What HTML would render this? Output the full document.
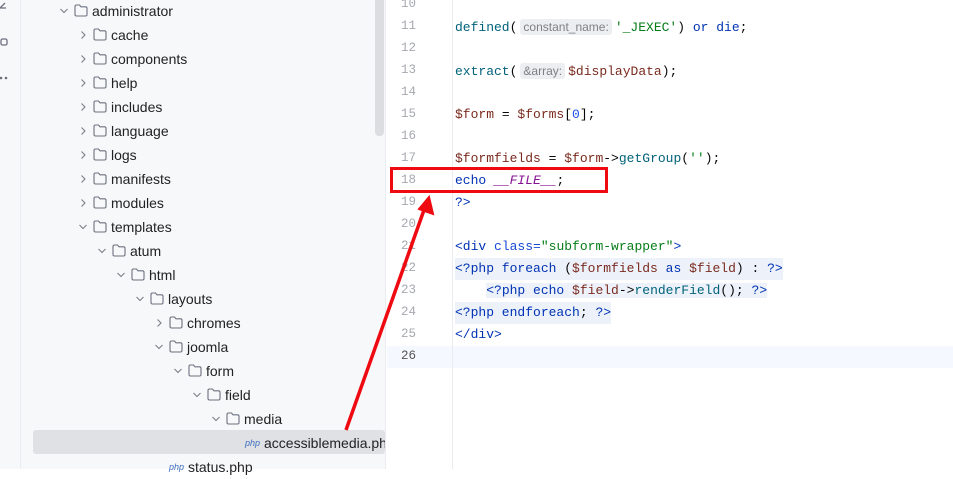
<!DOCTYPE html>
<html><head><meta charset="utf-8"><style>
*{margin:0;padding:0;box-sizing:border-box}
body{width:953px;height:469px;overflow:hidden;background:#fff;position:relative;font-family:"Liberation Sans",sans-serif}
#strip{position:absolute;left:0;top:0;width:21px;height:469px;background:#f7f8fa;border-right:1px solid #ebecf0}
#tree{position:absolute;left:21px;top:0;width:365px;height:469px;background:#f7f8fa;border-right:1px solid #ebecf0}
.row{position:absolute;height:24px;line-height:24px;font-size:14px;color:#222;white-space:nowrap;overflow:hidden}
.chev{position:absolute;top:0;width:10px;height:24px}
.fold{position:absolute;top:5px;width:14px;height:13px}
.sel{position:absolute;left:33px;top:430px;width:352px;height:24px;background:#dfe1e5;border-radius:3px}
.php{font-style:italic;font-size:9px;color:#3f6fc0;position:absolute;top:0}
#scroll{position:absolute;left:375px;top:0;width:9px;height:136px;background:#dcdde0;border-radius:0 0 4px 4px}
#gutter{position:absolute;left:386px;top:0;width:67px;height:469px;border-right:1px solid #ebecf0}
.ln{position:absolute;left:386px;width:30px;text-align:right;font-family:"Liberation Mono",monospace;font-size:12.5px;color:#a6a9b0;height:22px;line-height:22px}
.code{position:absolute;left:455px;font-family:"Liberation Mono",monospace;font-size:13px;height:22px;line-height:22px;white-space:pre;color:#080808}
.fn{color:#00627a}.kw{color:#0033b3}.v{color:#7a2a1e}.s{color:#067d17}.n{color:#1750eb}.c{color:#871094;font-style:italic}
.hint{background:#eceef2;color:#7d7f85;font-family:"Liberation Sans",sans-serif;font-size:12px;padding:1px 3px;border-radius:3px;margin:0 3px}
.phpbg{background:#edf2fa}
.cur{position:absolute;left:387px;top:346px;width:566px;height:22px;background:#f5f8fe}
</style></head><body>
<div id="strip">
<svg width="21" height="100" style="position:absolute;left:0;top:0"><path d="M0 8 L5 3 M0 8 L6 8" stroke="#6c707e" stroke-width="1.3" fill="none"/><rect x="1" y="39" width="6" height="6" rx="1.5" stroke="#6c707e" fill="none" stroke-width="1.3"/><circle cx="1" cy="78" r="1.3" fill="#6c707e"/><circle cx="6" cy="78" r="1.3" fill="#6c707e"/></svg>
</div>
<div id="tree"></div>
<div class="sel"></div>
<div id="scroll"></div>
<div id="tree-rows"></div>
<script>
var rows=[["administrator",0,"d"],["cache",1,"r"],["components",1,"r"],["help",1,"r"],["includes",1,"r"],["language",1,"r"],["logs",1,"r"],["manifests",1,"r"],["modules",1,"r"],["templates",1,"d"],["atum",2,"d"],["html",3,"d"],["layouts",4,"d"],["chromes",5,"r"],["joomla",5,"d"],["form",6,"d"],["field",7,"d"],["media",8,"d"],["accessiblemedia.php",9,"f"],["status.php",5,"f"]];
var h="";
rows.forEach(function(r,i){
 var y=i*24-1, cx=59+r[1]*19, fx=cx+15, tx=cx+33;
 h+='<div class="row" style="left:0;top:'+y+'px;width:385px">';
 if(r[2]=="d") h+='<svg class="chev" style="left:'+cx+'px" viewBox="0 0 10 24"><path d="M1.5 10 L5 13.5 L8.5 10" stroke="#7a7e85" stroke-width="1.1" fill="none"/></svg>';
 if(r[2]=="r") h+='<svg class="chev" style="left:'+cx+'px" viewBox="0 0 10 24"><path d="M3.5 8.5 L7 12 L3.5 15.5" stroke="#7a7e85" stroke-width="1.1" fill="none"/></svg>';
 if(r[2]!="f"){h+='<svg class="fold" style="left:'+fx+'px" viewBox="0 0 14 13"><path d="M1 2.5 Q1 1 2.5 1 H5.5 L7 2.8 H11.5 Q13 2.8 13 4.3 V10.5 Q13 12 11.5 12 H2.5 Q1 12 1 10.5 Z" stroke="#6c707e" stroke-width="1.1" fill="none"/></svg>';
  h+='<span style="position:absolute;left:'+tx+'px">'+r[0]+'</span>';}
 else{h+='<span class="php" style="left:'+(fx)+'px">php</span><span style="position:absolute;left:'+(tx+1)+'px">'+r[0]+'</span>';}
 h+='</div>';
});
document.getElementById("tree-rows").innerHTML=h;
</script>
<div class="cur"></div>
<div id="gutter"></div>
<div id="lns"></div>
<script>
var s="";for(var n=10;n<=26;n++){s+='<div class="ln" style="top:'+(4+(n-10)*22-11)+'px;'+(n==26?'color:#555;':'')+'">'+n+'</div>';}
document.getElementById("lns").innerHTML=s;
</script>
<div class="code" style="top:16px"><span class="fn">defined</span>(<span class="hint">constant_name:</span><span class="s">'_JEXEC'</span>) <span class="kw">or die</span>;</div>
<div class="code" style="top:60px"><span class="fn">extract</span>(<span class="hint">&amp;array:</span><span class="v">$displayData</span>);</div>
<div class="code" style="top:104px"><span class="v">$form</span> = <span class="v">$forms</span>[<span class="n">0</span>];</div>
<div class="code" style="top:148px"><span class="v">$formfields</span> = <span class="v">$form</span>-&gt;<span class="fn">getGroup</span>(<span class="s">''</span>);</div>
<div class="code" style="top:170px"><span class="kw">echo</span> <span class="c">__FILE__</span>;</div>
<div class="code kw" style="top:192px">?&gt;</div>
<div class="code" style="top:236px"><span class="kw">&lt;div</span> <span style="color:#174ad4">class=</span><span class="s">"subform-wrapper"</span><span class="kw">&gt;</span></div>
<div class="code phpbg" style="top:258px"><span class="kw">&lt;?php foreach</span> (<span class="v">$formfields</span> <span class="kw">as</span> <span class="v">$field</span>) : <span class="kw">?&gt;</span></div>
<div class="code" style="top:280px">    <span class="phpbg"><span class="kw">&lt;?php echo</span> <span class="v">$field</span>-&gt;<span class="fn">renderField</span>(); <span class="kw">?&gt;</span></span></div>
<div class="code phpbg" style="top:302px"><span class="kw">&lt;?php endforeach</span>; <span class="kw">?&gt;</span></div>
<div class="code" style="top:324px"><span class="kw">&lt;/div&gt;</span></div>
<div style="position:absolute;left:390px;top:167px;width:218px;height:26px;border:3px solid #ee0a10"></div>
<svg width="953" height="469" style="position:absolute;left:0;top:0"><line x1="346" y1="430" x2="424" y2="210" stroke="#ee0a10" stroke-width="3.5"/><path d="M429 197 L433 214 L419 209 Z" fill="#ee0a10" stroke="#ee0a10" stroke-width="2"/></svg>
</body></html>
